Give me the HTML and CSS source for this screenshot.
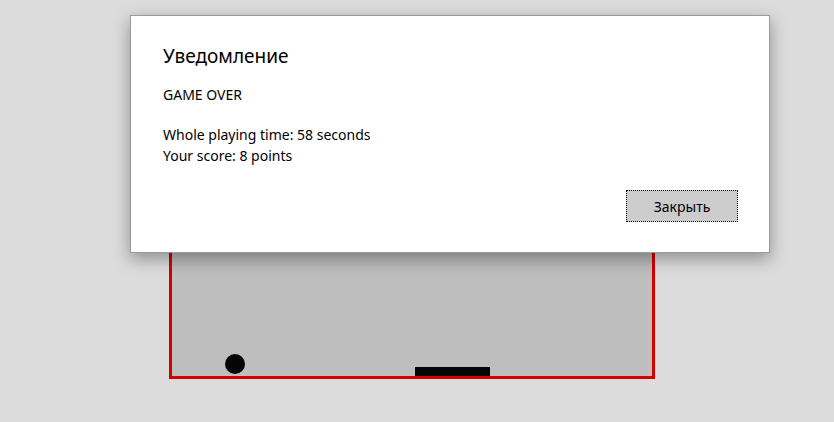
FILE: index.html
```html
<!DOCTYPE html>
<html lang="ru">
<head>
<meta charset="utf-8">
<link rel="stylesheet" href="styles.css">
</head>
<body>
  <div class="stage">
    <div class="field">
      <div class="floor">
        <div class="ball"></div>
        <div class="paddle"></div>
      </div>
    </div>
  </div>
  <div class="dialog" role="dialog">
    <h1 class="title">Уведомление</h1>
    <p class="msg">GAME OVER</p>
    <p class="msg stats">Whole playing time: 58 seconds<br>Your score: 8 points</p>
    <div class="actions"><button class="btn">Закрыть</button></div>
  </div>
</body>
</html>
```
FILE: styles.css
```css
html, body { margin: 0; padding: 0; }
body {
  background: #dcdcdc;
  width: 834px;
  height: 422px;
  overflow: hidden;
  font-family: "Noto Sans", "Open Sans", sans-serif;
  color: #000;
}
.stage {
  padding: 40px 0 0 169px;
}
.field {
  width: 480px;
  height: 333px;
  border: 3px solid #d40000;
  background: #bebebe;
  display: flex;
  flex-direction: column;
  justify-content: flex-end;
}
.floor {
  display: flex;
  align-items: flex-end;
  height: 24px;
}
.ball {
  width: 20px;
  height: 20px;
  border-radius: 50%;
  background: #050505;
  margin: 0 0 2px 53px;
}
.paddle {
  width: 75px;
  height: 9px;
  background: #050505;
  margin-left: 170px;
}
.dialog {
  position: absolute;
  left: 130px;
  top: 15px;
  width: 575px;
  height: 208px;
  padding: 20px 31px 8px 32px;
  background: #fff;
  border: 1px solid #9a9a9a;
  box-shadow: 0 6px 16px rgba(0,0,0,0.35);
  display: flex;
  flex-direction: column;
}
.title {
  margin: 0;
  font-size: 19px;
  font-weight: 400;
  line-height: 40px;
}
.msg {
  margin: 8px 0 0 0;
  font-size: 14px;
  line-height: 21px;
}
.stats { margin-top: 19px; }
.actions {
  display: flex;
  justify-content: flex-end;
  margin-top: 24px;
}
.btn {
  width: 112px;
  height: 32px;
  background: #cccccc;
  border: 1px dotted #000;
  font-family: inherit;
  font-size: 14px;
  color: #000;
  padding: 0;
}
```
